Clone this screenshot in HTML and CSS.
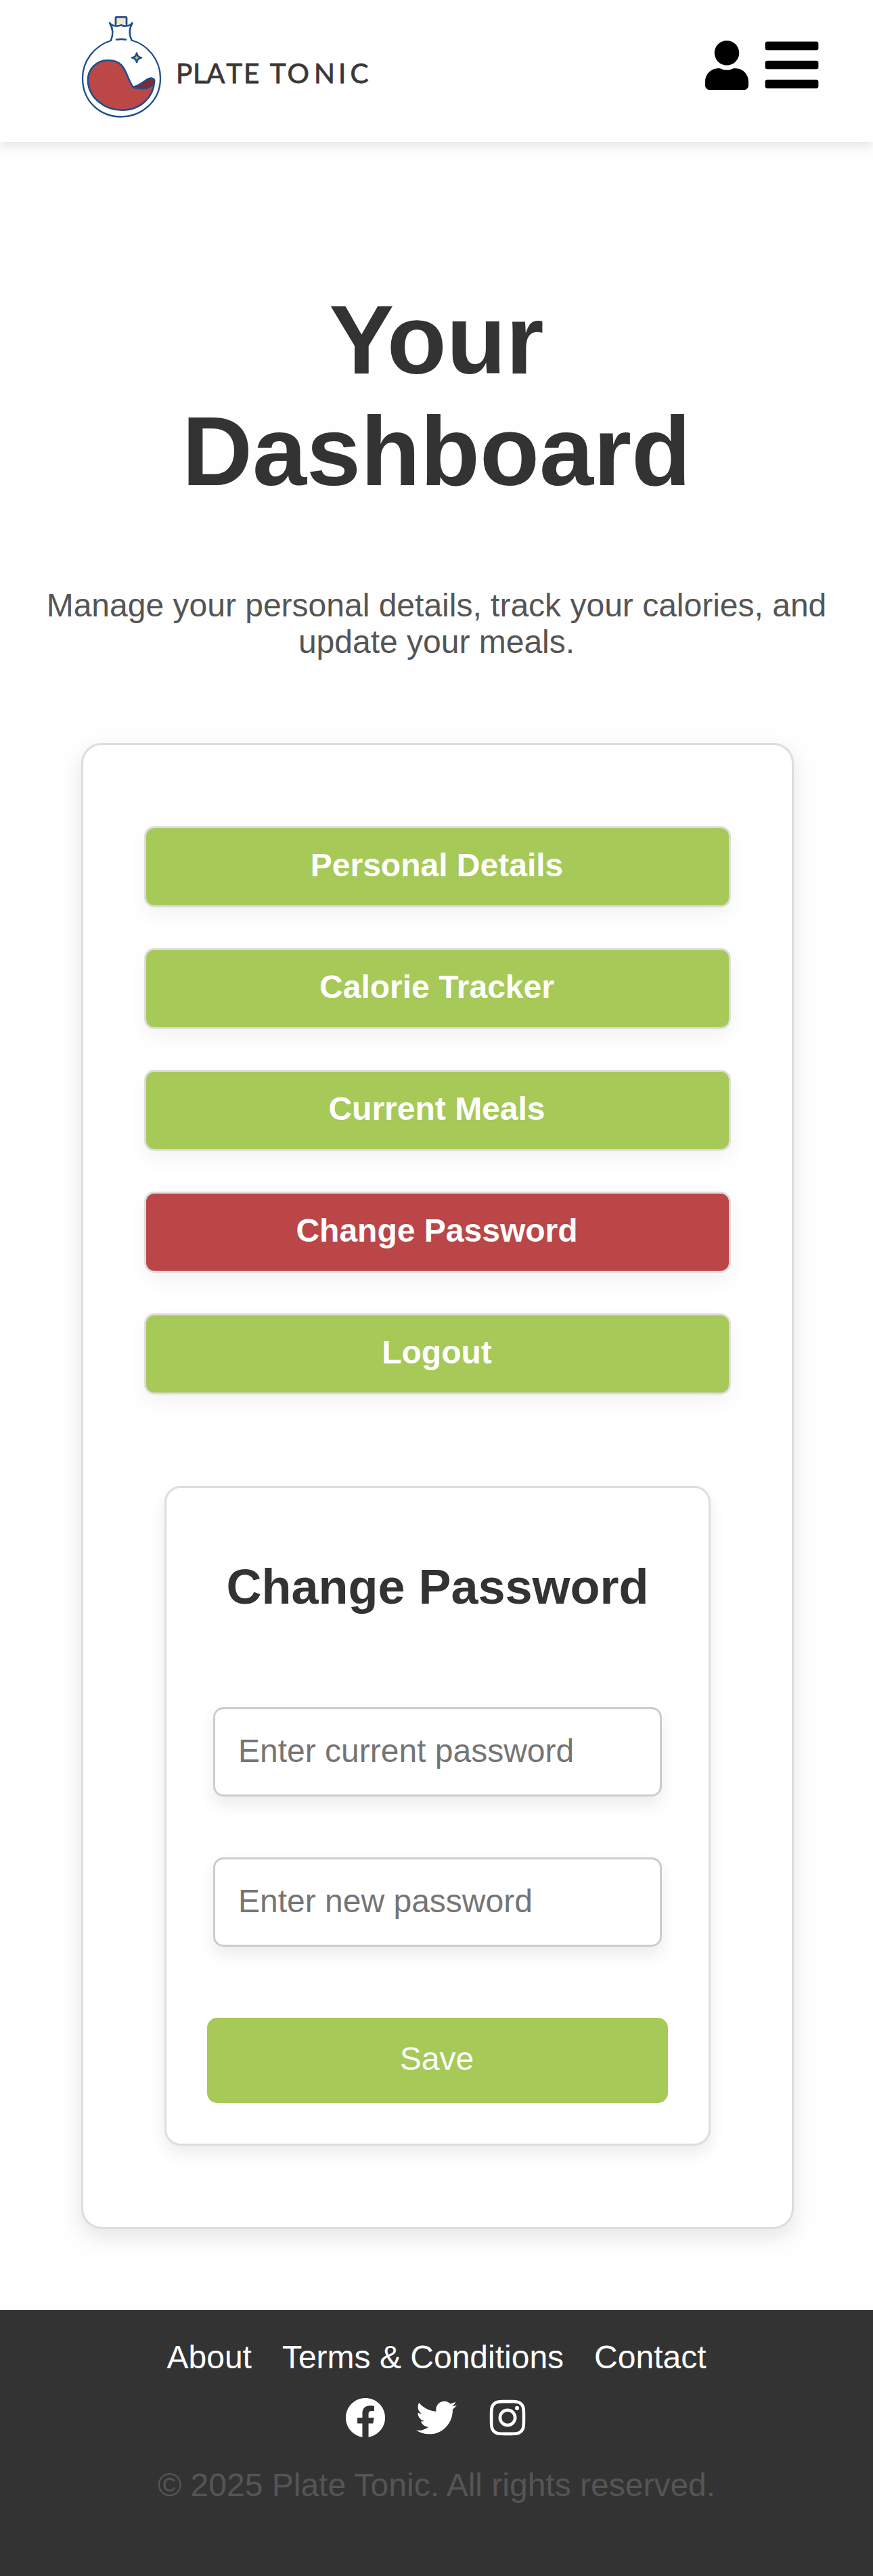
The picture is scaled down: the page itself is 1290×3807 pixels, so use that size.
FILE: index.html
```html
<!DOCTYPE html>
<html lang="en">
<head>
<meta charset="utf-8">
<title>Plate Tonic - Your Dashboard</title>
<link rel="stylesheet" href="styles.css">
</head>
<body>
<header class="header">
  <svg class="logo" viewBox="0 0 430 150" role="img" aria-label="Plate Tonic">
    <g fill="none" stroke="#1f4e8c" stroke-width="2.6" stroke-linecap="round" stroke-linejoin="round">
      <path fill="#f2e6cd" stroke="none" d="M51 5h16v12l-8-1-8 1z"/>
      <path stroke-width="2.8" d="M51 16V6.500q0-1.200 1-1.200h14q1 0 1 1.200V16"/>
      <path d="M44 39.500C48 30 47 22 42 13.800Q45 18 50 18.300Q55 19.300 58.700 17Q63 19.300 67 18.300Q72 18 75.500 13.800C71 22 70 30 74.500 39.500"/>
      <path stroke-width="2.300" d="M44 40C19 48 2 70 2 95.500C2 130 28 152.500 58.500 152.500S117 130 117 95.500C117 68 98 46 74.500 39.500"/>
      <path d="M52 38.600q7-1.400 14 0"/>
      <path fill="#bb4747" d="M10 100C9 84 21 69 40 69C66 69 65 91 75.500 107Q77 109.500 79 108.500L108 101C107 122 89 142.700 60 142.700C34 142.700 11 124 10 100Z"/>
      <path fill="#7d2c30" d="M77 109Q85 106 90 102.500C95 99 99 95 104 95.500Q109 96.500 108 101C106 109 94 114 77 109Z"/>
      <path fill="#a6c958" d="M82 58.500q1.200 6 7 6.800q-5.800 1-7 6.700q-1.200-5.700-7-6.700q5.800-.8 7-6.800z"/>
    </g>
    <text class="logo-text" y="102.500" x="140 165 185 214.300 240 278.800 304.500 344 380 397.500">PLATETONIC</text>
  </svg>
  <nav class="header-icons">
    <svg class="icon-user" viewBox="0 0 448 512"><path d="M224 256c70.700 0 128-57.300 128-128S294.700 0 224 0 96 57.300 96 128s57.300 128 128 128zm89.600 32h-16.700c-22.200 10.200-46.900 16-72.900 16s-50.600-5.800-72.900-16h-16.700C60.200 288 0 348.200 0 422.400V464c0 26.500 21.500 48 48 48h352c26.500 0 48-21.500 48-48v-41.600c0-74.200-60.200-134.400-134.400-134.400z"/></svg>
    <svg class="icon-bars" viewBox="0 0 448 512"><path d="M16 132h416c8.837 0 16-7.163 16-16V76c0-8.837-7.163-16-16-16H16C7.163 60 0 67.163 0 76v40c0 8.837 7.163 16 16 16zm0 160h416c8.837 0 16-7.163 16-16v-40c0-8.837-7.163-16-16-16H16c-8.837 0-16 7.163-16 16v40c0 8.837 7.163 16 16 16zm0 160h416c8.837 0 16-7.163 16-16v-40c0-8.837-7.163-16-16-16H16c-8.837 0-16 7.163-16 16v40c0 8.837 7.163 16 16 16z"/></svg>
  </nav>
</header>
<main class="main">
  <h1 class="title">Your<br>Dashboard</h1>
  <p class="intro">Manage your personal details, track your calories, and update your meals.</p>
  <section class="panel">
    <a class="btn">Personal Details</a>
    <a class="btn">Calorie Tracker</a>
    <a class="btn">Current Meals</a>
    <a class="btn btn-active">Change Password</a>
    <a class="btn">Logout</a>
    <form class="card">
      <h2 class="card-title">Change Password</h2>
      <input class="field" type="password" placeholder="Enter current password">
      <input class="field" type="password" placeholder="Enter new password">
      <button class="save" type="button">Save</button>
    </form>
  </section>
</main>
<footer class="footer">
  <nav class="links"><a>About</a><a>Terms &amp; Conditions</a><a>Contact</a></nav>
  <div class="social">
    <svg class="icon-social" viewBox="0 0 512 512"><path d="M504 256C504 119 393 8 256 8S8 119 8 256c0 123.780 90.690 226.380 209.250 245V327.690h-63V256h63v-54.640c0-62.150 37-96.480 93.670-96.480 27.140 0 55.520 4.840 55.520 4.840v61h-31.280c-30.800 0-40.410 19.120-40.410 38.730V256h68.780l-11 71.690h-57.780V501C413.310 482.380 504 379.780 504 256z"/></svg>
    <svg class="icon-social" viewBox="0 0 512 512"><path d="M459.370 151.716c.325 4.548.325 9.097.325 13.645 0 138.720-105.583 298.558-298.558 298.558-59.452 0-114.680-17.219-161.137-47.106 8.447.974 16.568 1.299 25.340 1.299 49.055 0 94.213-16.568 130.274-44.832-46.132-.975-84.792-31.188-98.112-72.772 6.498.974 12.995 1.624 19.818 1.624 9.421 0 18.843-1.300 27.614-3.573-48.081-9.747-84.143-51.980-84.143-102.985v-1.299c13.969 7.797 30.214 12.670 47.431 13.319-28.264-18.843-46.781-51.005-46.781-87.391 0-19.492 5.197-37.360 14.294-52.954 51.655 63.675 129.300 105.258 216.365 109.807-1.624-7.797-2.599-15.918-2.599-24.040 0-57.828 46.782-104.934 104.934-104.934 30.213 0 57.502 12.670 76.670 33.137 23.715-4.548 46.456-13.320 66.599-25.340-7.798 24.366-24.366 44.833-46.132 57.827 21.117-2.273 41.584-8.122 60.426-16.243-14.292 20.791-32.161 39.308-52.628 54.253z"/></svg>
    <svg class="icon-social" viewBox="0 0 448 512"><path d="M224.100 141c-63.600 0-114.900 51.300-114.900 114.900s51.300 114.900 114.900 114.900S339 319.500 339 255.900 287.700 141 224.100 141zm0 189.600c-41.100 0-74.700-33.500-74.700-74.700s33.500-74.700 74.700-74.700 74.700 33.500 74.700 74.700-33.600 74.700-74.700 74.700zm146.400-194.300c0 14.900-12 26.800-26.800 26.800-14.900 0-26.800-12-26.800-26.800s12-26.800 26.800-26.800 26.800 12 26.800 26.800zm76.100 27.200c-1.700-35.900-9.900-67.700-36.200-93.900-26.200-26.200-58-34.400-93.900-36.200-37-2.100-147.900-2.100-184.900 0-35.800 1.700-67.600 9.900-93.900 36.100s-34.400 58-36.200 93.900c-2.100 37-2.100 147.900 0 184.900 1.700 35.900 9.900 67.700 36.200 93.900s58 34.400 93.900 36.200c37 2.100 147.900 2.100 184.900 0 35.900-1.700 67.700-9.900 93.900-36.200 26.200-26.200 34.400-58 36.200-93.900 2.100-37 2.100-147.800 0-184.800zM398.800 388c-7.800 19.600-22.900 34.700-42.600 42.600-29.500 11.700-99.500 9-132.100 9s-102.700 2.600-132.100-9c-19.600-7.800-34.700-22.900-42.600-42.600-11.700-29.500-9-99.500-9-132.100s-2.600-102.700 9-132.100c7.800-19.600 22.900-34.700 42.600-42.600 29.500-11.700 99.500-9 132.100-9s102.700-2.600 132.100 9c19.600 7.800 34.700 22.900 42.600 42.600 11.700 29.500 9 99.500 9 132.100s2.700 102.700-9 132.100z"/></svg>
  </div>
  <p class="copyright">© 2025 Plate Tonic. All rights reserved.</p>
</footer>
</body>
</html>
```
FILE: styles.css
```css
* { box-sizing: border-box; }
body {
  margin: 0;
  background: #fefefe;
  color: #333;
  font: 48px/54px "Liberation Sans", Arial, sans-serif;
}
.header {
  display: flex;
  justify-content: space-between;
  align-items: flex-start;
  height: 210px;
  padding: 20px 80px 0 120px;
  background: #fff;
  box-shadow: 0 6px 15px rgba(0, 0, 0, .1);
}
.logo { width: 430px; height: 150px; overflow: visible; }
.logo-text {
  font: 400 40.500px Lato, sans-serif;
  fill: #383838;
  stroke: #383838;
  stroke-width: .8px;
}
.header-icons { display: flex; align-items: center; gap: 24px; padding-top: 31px; }
.icon-user { width: 64px; height: 73px; margin-top: 1px; }
.icon-bars { width: 80px; height: 90px; }
.main { padding: 210px 60px 120px; }
.title { margin: 0; font-size: 144px; line-height: 165px; text-align: center; }
.intro { margin: 118px 0 0; color: #555; text-align: center; }
.panel {
  display: flex;
  flex-direction: column;
  gap: 60px;
  width: 1053px;
  margin: 122px 0 0 60px;
  padding: 120px 90px;
  border: 3px solid #ddd;
  border-radius: 30px;
  background: #fff;
  box-shadow: 0 12px 30px rgba(0, 0, 0, .1);
}
.btn {
  height: 120px;
  padding: 28px 32px 28px 30px;
  border: 3px solid #ddd;
  border-radius: 15px;
  background: #a6c958;
  box-shadow: 0 12px 30px rgba(0, 0, 0, .05);
  color: #fff;
  font-weight: bold;
  text-align: center;
}
.btn-active { background: #bb4648; }
.card {
  display: flex;
  flex-direction: column;
  align-items: center;
  height: 975px;
  margin: 75px 30px 0;
  padding: 104px 60px 60px;
  border: 3px solid #ddd;
  border-radius: 24px;
  background: #fff;
  box-shadow: 0 12px 24px rgba(0, 0, 0, .08);
}
.card-title { margin: 0 0 136px; font-size: 72px; line-height: 84px; white-space: nowrap; }
.field {
  width: 663px;
  height: 132px;
  margin: 0 0 90px;
  padding: 0 33px 4px 34px;
  border: 3px solid #ccc;
  border-radius: 15px;
  background: #fff;
  box-shadow: 0 12px 24px rgba(0, 0, 0, .08);
  font: inherit;
}
.field::placeholder { color: #757575; }
.save {
  width: 681px;
  height: 126px;
  margin-top: 15px;
  padding: 0 2px 4px 0;
  border: 0;
  border-radius: 15px;
  background: #a6c958;
  color: #fff;
  font: inherit;
}
.footer {
  display: flex;
  flex-direction: column;
  align-items: center;
  height: 393px;
  padding-top: 43px;
  background: #333;
}
.links { display: flex; gap: 45px; color: #fff; }
.social { display: flex; gap: 45px; margin-top: 32px; fill: #fff; }
.icon-social { width: 60px; height: 60px; }
.copyright { margin: 43px 0 0; color: #555; }
```
